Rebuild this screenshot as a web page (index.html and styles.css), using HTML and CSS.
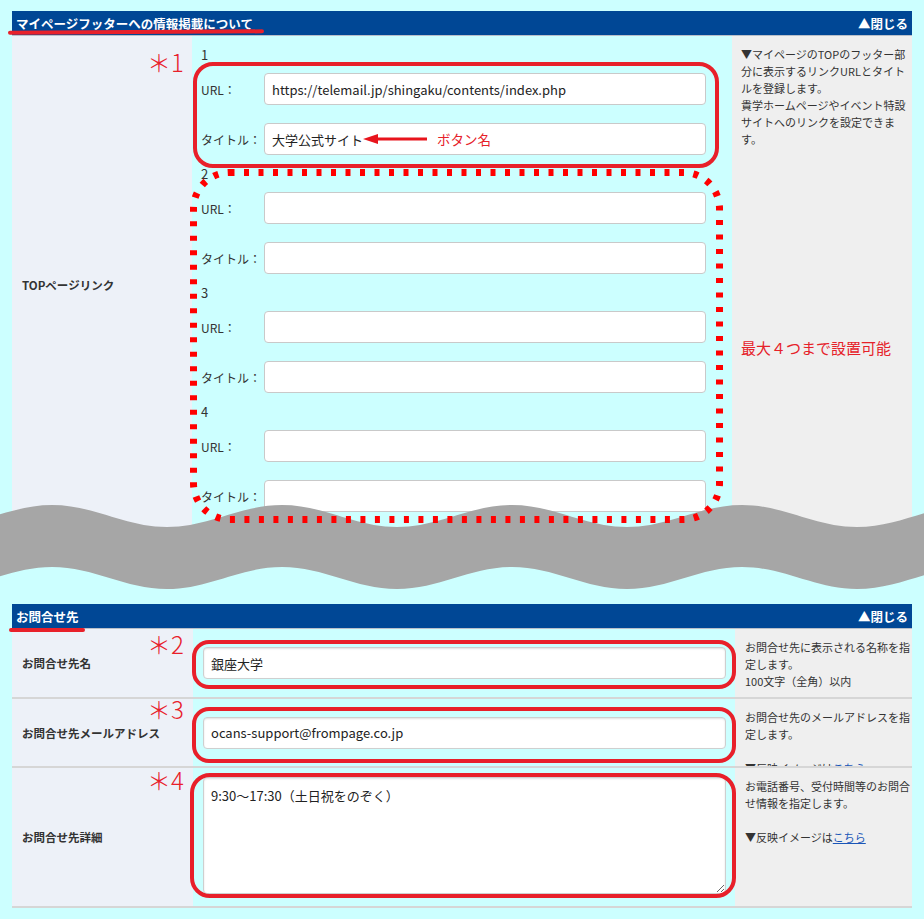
FILE: index.html
```html
<!DOCTYPE html>
<html lang="ja">
<head>
    <meta charset="UTF-8">
    <meta name="viewport" content="width=device-width, initial-scale=1.0">
    <title>マイページ設定</title>
    <link rel="stylesheet" href="styles.css">
</head>
<body>

<div class="page">

    <section class="panel">
        <div class="panel-head">
            <span>マイページフッターへの情報掲載について</span>
            <span>▲閉じる</span>
        </div>
        <div class="row row-links">
            <div class="cell-label">TOPページリンク</div>
            <div class="cell-input">
                <div class="link-group">
                    <div class="link-num">1</div>
                    <div class="field"><label>URL：</label><input type="text" value="https://telemail.jp/shingaku/contents/index.php"></div>
                    <div class="field"><label>タイトル：</label><input type="text" value="大学公式サイト"></div>
                </div>
                <div class="link-group">
                    <div class="link-num">2</div>
                    <div class="field"><label>URL：</label><input type="text"></div>
                    <div class="field"><label>タイトル：</label><input type="text"></div>
                </div>
                <div class="link-group">
                    <div class="link-num">3</div>
                    <div class="field"><label>URL：</label><input type="text"></div>
                    <div class="field"><label>タイトル：</label><input type="text"></div>
                </div>
                <div class="link-group">
                    <div class="link-num">4</div>
                    <div class="field"><label>URL：</label><input type="text"></div>
                    <div class="field"><label>タイトル：</label><input type="text"></div>
                </div>
            </div>
            <div class="cell-note">
                <p>▼マイページのTOPのフッター部分に表示するリンクURLとタイトルを登録します。<br>貴学ホームページやイベント特設サイトへのリンクを設定できます。</p>
                <p class="note-red">最大４つまで設置可能</p>
            </div>
        </div>
    </section>

    <section class="panel panel-contact">
        <div class="panel-head">
            <span>お問合せ先</span>
            <span>▲閉じる</span>
        </div>
        <div class="row row-name">
            <div class="cell-label">お問合せ先名</div>
            <div class="cell-input"><input type="text" value="銀座大学"></div>
            <div class="cell-note">お問合せ先に表示される名称を指定します。<br>100文字（全角）以内</div>
        </div>
        <div class="row row-mail">
            <div class="cell-label">お問合せ先メールアドレス</div>
            <div class="cell-input"><input type="text" value="ocans-support@frompage.co.jp"></div>
            <div class="cell-note">お問合せ先のメールアドレスを指定します。<br><br>▼反映イメージは<a href="#">こちら</a></div>
        </div>
        <div class="row row-detail">
            <div class="cell-label">お問合せ先詳細</div>
            <div class="cell-input"><textarea>9:30～17:30（土日祝をのぞく）</textarea></div>
            <div class="cell-note">お電話番号、受付時間等のお問合せ情報を指定します。<br><br>▼反映イメージは<a href="#">こちら</a></div>
        </div>
    </section>

    <!-- torn-page wave -->
    <svg class="wave" width="924" height="95" viewBox="0 0 924 95">
        <path d="M -178 5 C -136 5, -105 27, -63 27 S 10 5, 52 5 S 125 27, 167 27 S 240 5, 282 5 S 355 27, 397 27 S 470 5, 512 5 S 585 27, 627 27 S 700 5, 742 5 S 815 27, 857 27 S 930 5, 972 5
                 L 972 67 C 930 67, 899 89, 857 89 S 784 67, 742 67 S 669 89, 627 89 S 554 67, 512 67 S 439 89, 397 89 S 324 67, 282 67 S 209 89, 167 89 S 94 67, 52 67 S -21 89, -63 89 S -136 67, -178 67 Z" fill="#a6a6a6"/>
    </svg>

    <!-- red annotations -->
    <span class="pen-line pen-line-1"></span>
    <span class="pen-line pen-line-2"></span>

    <span class="star star-1">＊1</span>
    <span class="star star-2">＊2</span>
    <span class="star star-3">＊3</span>
    <span class="star star-4">＊4</span>

    <div class="ring ring-1"></div>
    <div class="ring ring-2"></div>
    <div class="ring ring-3"></div>
    <div class="ring ring-4"></div>

    <svg class="dotted-ring" width="534" height="360" viewBox="0 0 534 360">
        <rect x="3.5" y="3.5" width="526" height="347" rx="36" fill="none" stroke="#ff0000" stroke-width="7" stroke-dasharray="5 9.5"/>
    </svg>

    <svg class="arrow" width="70" height="14" viewBox="0 0 70 14">
        <polygon points="3,7 18,2 18,12" fill="#e8141c"/>
        <line x1="16" y1="7" x2="67" y2="7" stroke="#e8141c" stroke-width="3"/>
    </svg>
    <span class="arrow-text">ボタン名</span>

</div>

</body>
</html>
```

FILE: styles.css
```css
* {
    box-sizing: border-box;
}

body {
    margin: 0;
    background: #ccffff;
    font-family: "Noto Sans CJK JP", "Noto Sans", sans-serif;
    color: #333;
}

.page {
    position: relative;
    width: 924px;
    height: 919px;
    padding: 11px 12px 0;
    overflow: hidden;
}

p {
    margin: 0;
}

/* panel header */
.panel-head {
    display: flex;
    justify-content: space-between;
    align-items: center;
    height: 25px;
    padding: 0 4px;
    background: #004795;
    border-bottom: 1px solid #b9bfc9;
    color: #fff;
    font-size: 12.5px;
    font-weight: bold;
}

.panel-contact {
    margin-top: 70px;
}

/* rows */
.row {
    display: grid;
    grid-template-columns: 181px 542px 177px;
    border-bottom: 2px solid #d6d6d6;
}

.row-links {
    grid-template-columns: 180px 540px 180px;
    height: 498px;
    border-bottom: none;
}

.row-name { height: 70px; }
.row-mail { height: 69px; }
.row-detail { height: 140px; }

.cell-label {
    display: flex;
    align-items: center;
    padding-left: 10px;
    background: #edf1f8;
    font-size: 11.5px;
    font-weight: bold;
    color: #333;
}

.cell-input {
    display: flex;
    align-items: center;
    padding: 0 9px 0 10px;
}

.row-detail .cell-input {
    align-items: flex-start;
    padding-top: 9px;
}

.cell-note {
    padding: 10px 0 0 10px;
    background: #efefef;
    font-size: 11px;
    line-height: 17px;
    overflow: hidden;
}

.cell-note a {
    color: #1a56b8;
}

.row-links .cell-note {
    padding: 10px 5px 0 9px;
}

.note-red {
    margin-top: 190px;
    font-size: 15px;
    line-height: 20px;
    color: #e62129;
}

/* link groups */
.row-links .cell-input {
    display: block;
    padding: 9px 26px 13px 9px;
}

.link-group {
    padding-bottom: 9px;
}

.link-num {
    height: 19px;
    line-height: 19px;
    margin-bottom: 9px;
    font-size: 13px;
}

.field {
    display: flex;
    align-items: center;
}

.field + .field {
    margin-top: 18px;
}

.field label {
    flex: none;
    width: 63px;
    font-size: 12px;
}

/* form controls */
input,
textarea {
    width: 100%;
    height: 32px;
    padding: 0 7px;
    border: 1px solid #c9c9c9;
    border-radius: 4px;
    background: #fff;
    font-family: inherit;
    font-size: 13px;
    color: #222;
}

.panel-contact input,
.panel-contact textarea {
    border-color: #cfcfcf;
    box-shadow: inset 0 1px 2px rgba(0, 0, 0, 0.12);
}

textarea {
    height: 117px;
    padding: 8px 7px;
    line-height: 19px;
}

/* wave */
.wave {
    position: absolute;
    left: 0;
    top: 500px;
    z-index: 1;
}

/* annotations */
.pen-line,
.star,
.ring,
.dotted-ring,
.arrow,
.arrow-text {
    position: absolute;
    z-index: 2;
}

.pen-line {
    height: 4px;
    border-radius: 2px;
    background: #e8202a;
}

.pen-line-1 { left: 8px; top: 30px; width: 256px; transform: rotate(-0.3deg); }
.pen-line-2 { left: 9px; top: 628px; width: 76px; }

.star {
    left: 147px;
    font-size: 24px;
    line-height: 24px;
    font-weight: 300;
    color: #e8202a;
}

.star-1 { top: 50px; }
.star-2 { top: 632px; }
.star-3 { top: 697px; }
.star-4 { top: 768px; }

.ring {
    border: 4px solid #e8202a;
    border-radius: 20px;
}

.ring-1 { left: 193px; top: 62px; width: 526px; height: 106px; }
.ring-2 { left: 192px; top: 640px; width: 544px; height: 49px; border-radius: 17px; }
.ring-3 { left: 192px; top: 707px; width: 544px; height: 56px; border-radius: 17px; }
.ring-4 { left: 190px; top: 773px; width: 546px; height: 125px; }

.dotted-ring {
    left: 190px;
    top: 169px;
}

.arrow {
    left: 360px;
    top: 132px;
}

.arrow-text {
    left: 437px;
    top: 129px;
    font-size: 13.5px;
    line-height: 20px;
    color: #e62129;
}
```
